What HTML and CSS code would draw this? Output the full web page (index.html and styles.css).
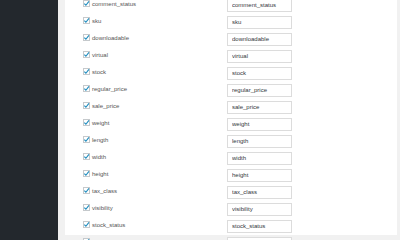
FILE: index.html
```html
<!DOCTYPE html>
<html>
<head>
  <title>Export columns</title>
  <link rel="stylesheet" href="styles.css">
</head>
<body>
  <div class="admin">
    <div class="sidebar"></div>
    <div class="content">
      <div class="panel">
        <div class="field-list">
          <div class="field-row"><label class="field-check"><span class="box"><svg viewBox="0 0 8 8"><path d="M1.5 4.2 L3.3 6 L6.8 1.6" /></svg></span>comment_status</label><input class="field-name" type="text" value="comment_status"></div>
          <div class="field-row"><label class="field-check"><span class="box"><svg viewBox="0 0 8 8"><path d="M1.5 4.2 L3.3 6 L6.8 1.6" /></svg></span>sku</label><input class="field-name" type="text" value="sku"></div>
          <div class="field-row"><label class="field-check"><span class="box"><svg viewBox="0 0 8 8"><path d="M1.5 4.2 L3.3 6 L6.8 1.6" /></svg></span>downloadable</label><input class="field-name" type="text" value="downloadable"></div>
          <div class="field-row"><label class="field-check"><span class="box"><svg viewBox="0 0 8 8"><path d="M1.5 4.2 L3.3 6 L6.8 1.6" /></svg></span>virtual</label><input class="field-name" type="text" value="virtual"></div>
          <div class="field-row"><label class="field-check"><span class="box"><svg viewBox="0 0 8 8"><path d="M1.5 4.2 L3.3 6 L6.8 1.6" /></svg></span>stock</label><input class="field-name" type="text" value="stock"></div>
          <div class="field-row"><label class="field-check"><span class="box"><svg viewBox="0 0 8 8"><path d="M1.5 4.2 L3.3 6 L6.8 1.6" /></svg></span>regular_price</label><input class="field-name" type="text" value="regular_price"></div>
          <div class="field-row"><label class="field-check"><span class="box"><svg viewBox="0 0 8 8"><path d="M1.5 4.2 L3.3 6 L6.8 1.6" /></svg></span>sale_price</label><input class="field-name" type="text" value="sale_price"></div>
          <div class="field-row"><label class="field-check"><span class="box"><svg viewBox="0 0 8 8"><path d="M1.5 4.2 L3.3 6 L6.8 1.6" /></svg></span>weight</label><input class="field-name" type="text" value="weight"></div>
          <div class="field-row"><label class="field-check"><span class="box"><svg viewBox="0 0 8 8"><path d="M1.5 4.2 L3.3 6 L6.8 1.6" /></svg></span>length</label><input class="field-name" type="text" value="length"></div>
          <div class="field-row"><label class="field-check"><span class="box"><svg viewBox="0 0 8 8"><path d="M1.5 4.2 L3.3 6 L6.8 1.6" /></svg></span>width</label><input class="field-name" type="text" value="width"></div>
          <div class="field-row"><label class="field-check"><span class="box"><svg viewBox="0 0 8 8"><path d="M1.5 4.2 L3.3 6 L6.8 1.6" /></svg></span>height</label><input class="field-name" type="text" value="height"></div>
          <div class="field-row"><label class="field-check"><span class="box"><svg viewBox="0 0 8 8"><path d="M1.5 4.2 L3.3 6 L6.8 1.6" /></svg></span>tax_class</label><input class="field-name" type="text" value="tax_class"></div>
          <div class="field-row"><label class="field-check"><span class="box"><svg viewBox="0 0 8 8"><path d="M1.5 4.2 L3.3 6 L6.8 1.6" /></svg></span>visibility</label><input class="field-name" type="text" value="visibility"></div>
          <div class="field-row"><label class="field-check"><span class="box"><svg viewBox="0 0 8 8"><path d="M1.5 4.2 L3.3 6 L6.8 1.6" /></svg></span>stock_status</label><input class="field-name" type="text" value="stock_status"></div>
          <div class="field-row"><label class="field-check"><span class="box"><svg viewBox="0 0 8 8"><path d="M1.5 4.2 L3.3 6 L6.8 1.6" /></svg></span>backorders</label><input class="field-name" type="text" value="backorders"></div>
        </div>
      </div>
    </div>
  </div>
</body>
</html>
```

FILE: styles.css
```css
html, body {
  margin: 0;
  height: 100%;
  overflow: hidden;
}

body {
  font-family: "Liberation Sans", Arial, sans-serif;
  background-color: #f1f1f1;
}

.admin {
  display: flex;
  height: 100%;
}

.sidebar {
  width: 58px;
  flex-shrink: 0;
  background-color: #23282d;
}

.content {
  flex: 1;
  padding: 0 3px 0 7px;
}

.panel {
  background-color: #fff;
  height: 100%;
  padding-left: 18px;
}

.field-list {
  margin-top: -5px;
}

.field-row {
  display: flex;
  align-items: center;
  height: 17px;
}

.field-check {
  display: flex;
  align-items: center;
  width: 144px;
  font-size: 6px;
  color: #555;
}

.box {
  display: inline-block;
  width: 7px;
  height: 7px;
  border: 1px solid #c5c9cc;
  background-color: #fff;
  margin-right: 2px;
  box-sizing: border-box;
  flex-shrink: 0;
}

.box svg {
  display: block;
  width: 7px;
  height: 7px;
  margin: -1px 0 0 -1px;
}

.box path {
  fill: none;
  stroke: #1e8cbe;
  stroke-width: 1.3;
}

.field-name {
  width: 65px;
  height: 13px;
  margin-top: 3px;
  padding: 0 4px;
  box-sizing: border-box;
  border: 1px solid #dcdcdc;
  font-family: "Liberation Sans", Arial, sans-serif;
  font-size: 6px;
  color: #32373c;
  outline: none;
}
```
